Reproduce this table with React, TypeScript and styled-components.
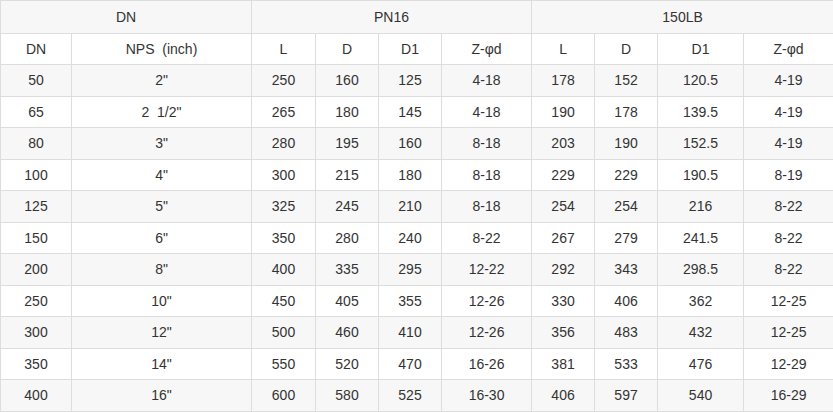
import React from "react";
import styled, { createGlobalStyle } from "styled-components";

const Global = createGlobalStyle`
  html, body { margin: 0; padding: 0; background: #fff; }
  body { font-family: Arial, "Liberation Sans", sans-serif; }
`;

const Table = styled.table`
  width: 833px;
  border-collapse: collapse;
  table-layout: fixed;
  font-family: Arial, "Liberation Sans", sans-serif;
  font-size: 14px;
  color: #333;
`;

const Row = styled.tr<{ $shade?: boolean; $h?: number }>`
  height: ${(p) => p.$h ?? 31.5}px;
  background: ${(p) => (p.$shade ? "#f7f7f7" : "#fff")};
`;

const Cell = styled.td`
  border: 1px solid #dddddd;
  text-align: center;
  vertical-align: middle;
  padding: 0;
  white-space: pre;
`;

const widths = [71, 180, 64, 63, 63, 90, 63, 63, 86, 90];

const head2 = ["DN", "NPS\u00a0 (inch)", "L", "D", "D1", "Z-φd", "L", "D", "D1", "Z-φd"];

const data: string[][] = [
  ["50", '2"', "250", "160", "125", "4-18", "178", "152", "120.5", "4-19"],
  ["65", '2\u00a0 1/2"', "265", "180", "145", "4-18", "190", "178", "139.5", "4-19"],
  ["80", '3"', "280", "195", "160", "8-18", "203", "190", "152.5", "4-19"],
  ["100", '4"', "300", "215", "180", "8-18", "229", "229", "190.5", "8-19"],
  ["125", '5"', "325", "245", "210", "8-18", "254", "254", "216", "8-22"],
  ["150", '6"', "350", "280", "240", "8-22", "267", "279", "241.5", "8-22"],
  ["200", '8"', "400", "335", "295", "12-22", "292", "343", "298.5", "8-22"],
  ["250", '10"', "450", "405", "355", "12-26", "330", "406", "362", "12-25"],
  ["300", '12"', "500", "460", "410", "12-26", "356", "483", "432", "12-25"],
  ["350", '14"', "550", "520", "470", "16-26", "381", "533", "476", "12-29"],
  ["400", '16"', "600", "580", "525", "16-30", "406", "597", "540", "16-29"],
];

export default function App() {
  return (
    <>
      <Global />
      <Table>
        <colgroup>
          {widths.map((w, i) => (
            <col key={i} style={{ width: w }} />
          ))}
        </colgroup>
        <tbody>
          <Row $shade $h={33}>
            <Cell colSpan={2}>DN</Cell>
            <Cell colSpan={4}>PN16</Cell>
            <Cell colSpan={4}>150LB</Cell>
          </Row>
          <Row $h={31}>
            {head2.map((t, i) => (
              <Cell key={i}>{t}</Cell>
            ))}
          </Row>
          {data.map((r, i) => (
            <Row key={i} $shade={i % 2 === 0}>
              {r.map((t, j) => (
                <Cell key={j}>{t}</Cell>
              ))}
            </Row>
          ))}
        </tbody>
      </Table>
    </>
  );
}
